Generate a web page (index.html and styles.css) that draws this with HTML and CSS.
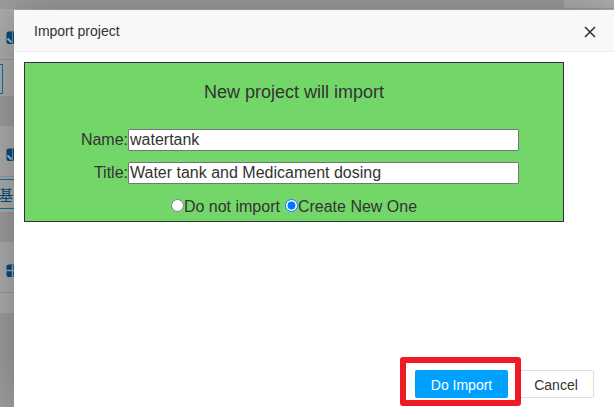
FILE: index.html
```html
<!DOCTYPE html>
<html lang="en">
<head>
<meta charset="utf-8">
<title>Import project</title>
<link rel="stylesheet" href="styles.css">
</head>
<body>
<div class="page">
  <div class="topbar"><div class="topbar-panel"></div></div>
  <section class="card card-first">
    <div class="card-head">
      <svg class="card-icon" width="12" height="14" viewBox="0 0 12 14"><rect x="0.5" y="0.5" width="14" height="12.5" rx="2" fill="#034b80"/><path d="M1.5 7.5L5.5 11.5" stroke="#b5bdc3" stroke-width="1.8"/><path d="M6.5 1v12" stroke="#7990a0"/></svg>
    </div>
    <div class="card-body"><span class="tag tag-short"></span></div>
  </section>
  <section class="card card-second">
    <div class="card-head">
      <svg class="card-icon" width="12" height="14" viewBox="0 0 12 14"><rect x="0.5" y="0.5" width="14" height="12.5" rx="2" fill="#034b80"/><path d="M1.5 7.5L5.5 11.5" stroke="#b5bdc3" stroke-width="1.8"/><path d="M6.5 1v12" stroke="#7990a0"/></svg>
    </div>
    <div class="card-body"><span class="tag tag-long">基</span></div>
  </section>
  <section class="card card-third">
    <div class="card-head">
      <svg class="card-icon" width="12" height="14" viewBox="0 0 12 14"><rect x="0.5" y="0.5" width="14" height="12.5" rx="2" fill="#034b80"/><path d="M0 6.5h12M6.5 1v12" stroke="#9aa9b3" stroke-width="1.5"/></svg>
    </div>
  </section>
</div>
<div class="modal">
  <header class="modal-head">
    <span>Import project</span>
    <svg class="close" width="12" height="12" viewBox="0 0 12 12"><path d="M1 1l10 10M11 1L1 11" stroke="#2e2d3c" stroke-width="1.5"/></svg>
  </header>
  <main class="modal-body">
    <div class="project">
      <h1 class="project-title">New project will import</h1>
      <label class="field"><span class="field-label">Name:</span><input class="field-input" type="text" value="watertank"></label>
      <label class="field"><span class="field-label">Title:</span><input class="field-input" type="text" value="Water tank and Medicament dosing"></label>
      <div class="choices">
        <label class="choice"><input type="radio" name="mode"><span>Do not import</span></label>
        <label class="choice"><input type="radio" name="mode" checked><span>Create New One</span></label>
      </div>
    </div>
  </main>
  <footer class="modal-foot">
    <div class="highlight"><button class="btn btn-primary">Do Import</button></div>
    <button class="btn btn-cancel">Cancel</button>
  </footer>
</div>
</body>
</html>
```
FILE: styles.css
```css
* { box-sizing: border-box; }
body {
  margin: 0;
  width: 614px;
  height: 407px;
  overflow: hidden;
  position: relative;
  font-family: "Liberation Sans", Arial, sans-serif;
  color: #333;
}
.page { height: 407px; background: #9e9e9e; overflow: hidden; }
.topbar { height: 9px; display: flex; justify-content: flex-end; }
.topbar-panel { width: 50px; height: 8px; background: #b0b0b0; }
.card { background: #adadad; margin-bottom: 30px; }
.card-first { height: 87px; }
.card-second { height: 86px; }
.card-third { height: 71px; }
.card-head { height: 51px; padding: 22px 0 0 6px; border-bottom: 1px solid #999; }
.card-icon { display: block; }
.card-body { padding-top: 4px; }
.card-second .card-body { padding-top: 2px; }
.tag { display: block; border: 1px solid #0a70ab; color: #034b80; }
.tag-short { width: 4px; height: 30px; margin-left: -1px; }
.tag-long { width: 40px; height: 30px; margin-left: -2px; font: 14px/28px "Noto Sans CJK SC", sans-serif; }
.modal {
  position: absolute;
  left: 14px;
  top: 10px;
  width: 600px;
  height: 397px;
  display: flex;
  flex-direction: column;
  background: #fff;
  border-radius: 2px 2px 0 0;
  box-shadow: 1px 1px 50px rgba(0, 0, 0, 0.3);
}
.modal-head {
  height: 42px;
  display: flex;
  align-items: center;
  justify-content: space-between;
  padding: 1px 18px 0 20px;
  background: #f8f8f8;
  border-bottom: 1px solid #eee;
  font-size: 14px;
}
.close { margin-top: 2px; }
.modal-body { flex: 1; padding: 10px; }
.project {
  width: 540px;
  height: 160px;
  border: 1px solid #333;
  background: #73d669;
  font-size: 16px;
}
.project-title {
  margin: 0 0 11px;
  padding-top: 2px;
  height: 55px;
  line-height: 54px;
  font-size: 18px;
  font-weight: 400;
  text-align: center;
}
.field { display: flex; align-items: center; height: 22px; margin-bottom: 11px; }
.field-label { width: 103px; text-align: right; }
.field-input {
  width: 391px;
  height: 22px;
  margin: 0;
  padding: 0 1px;
  border: 1px solid #767676;
  border-radius: 1px;
  font: 16px "Liberation Sans", Arial, sans-serif;
  color: #333;
}
.choices { display: flex; justify-content: center; gap: 5px; height: 22px; }
.choice { display: flex; align-items: center; }
.choice input { width: 13px; height: 13px; margin: 0 0 1px; }
.choice span { padding-top: 2px; }
.modal-foot { display: flex; align-items: flex-start; height: 50px; padding-left: 386px; }
.highlight {
  position: relative;
  z-index: 1;
  width: 121px;
  height: 49px;
  padding: 7px 0 0 9px;
  border: 6px solid #ee1b24;
  border-radius: 3px;
}
.btn { height: 28px; margin: 0; padding: 0; border-radius: 2px; font: 14px/28px "Liberation Sans", Arial, sans-serif; }
.btn-primary { display: block; width: 93px; padding-top: 1px; border: 0; background: #00a0ff; color: #fff; }
.btn-cancel { width: 76px; margin: 13px 0 0 -3px; border: 1px solid #dedede; background: #fff; color: #333; }
```
